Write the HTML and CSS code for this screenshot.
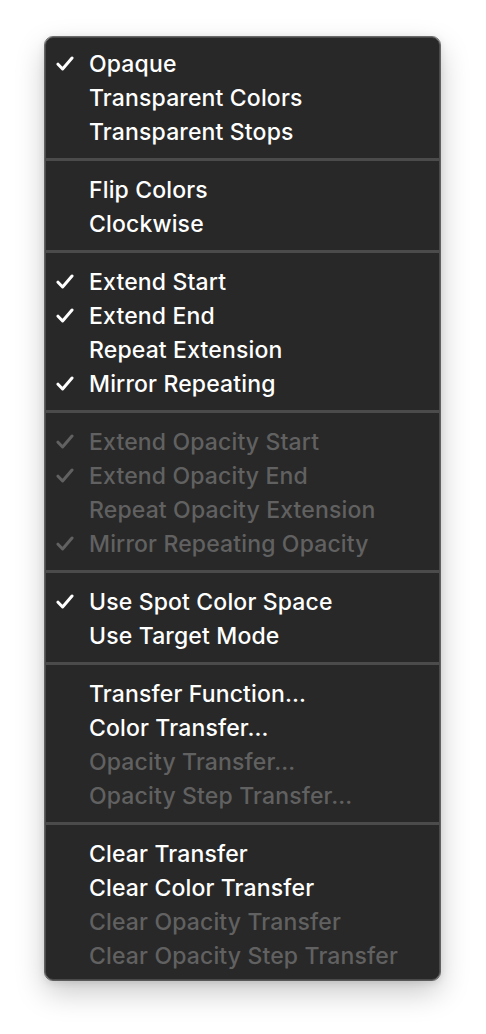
FILE: index.html
```html
<!DOCTYPE html>
<html lang="en">
<head>
    <meta charset="UTF-8">
    <meta name="viewport" content="width=device-width, initial-scale=1.0">
    <title>Gradient Options Menu</title>
    <link rel="stylesheet" href="styles.css">
</head>
<body>
    <div class="menu">
        <ul class="group">
            <li class="item checked">Opaque</li>
            <li class="item">Transparent Colors</li>
            <li class="item">Transparent Stops</li>
        </ul>
        <div class="separator"></div>
        <ul class="group">
            <li class="item">Flip Colors</li>
            <li class="item">Clockwise</li>
        </ul>
        <div class="separator"></div>
        <ul class="group">
            <li class="item checked">Extend Start</li>
            <li class="item checked">Extend End</li>
            <li class="item">Repeat Extension</li>
            <li class="item checked">Mirror Repeating</li>
        </ul>
        <div class="separator"></div>
        <ul class="group">
            <li class="item checked disabled">Extend Opacity Start</li>
            <li class="item checked disabled">Extend Opacity End</li>
            <li class="item disabled">Repeat Opacity Extension</li>
            <li class="item checked disabled">Mirror Repeating Opacity</li>
        </ul>
        <div class="separator"></div>
        <ul class="group">
            <li class="item checked">Use Spot Color Space</li>
            <li class="item">Use Target Mode</li>
        </ul>
        <div class="separator"></div>
        <ul class="group">
            <li class="item">Transfer Function…</li>
            <li class="item">Color Transfer…</li>
            <li class="item disabled">Opacity Transfer…</li>
            <li class="item disabled">Opacity Step Transfer…</li>
        </ul>
        <div class="separator"></div>
        <ul class="group">
            <li class="item">Clear Transfer</li>
            <li class="item">Clear Color Transfer</li>
            <li class="item disabled">Clear Opacity Transfer</li>
            <li class="item disabled">Clear Opacity Step Transfer</li>
        </ul>
    </div>
</body>
</html>
```

FILE: styles.css
```css
* {
    margin: 0;
    padding: 0;
    box-sizing: border-box;
}

body {
    background: #fff;
    font-family: 'Inter', 'Noto Sans', sans-serif;
    min-height: 100vh;
}

.menu {
    margin: 37px 0 0 45px;
    width: 395px;
    padding: 8px 0 7px;
    background: #282828;
    border: 1px solid #4a4a4a;
    border-radius: 8px;
    outline: 1px solid rgba(0, 0, 0, 0.55);
    box-shadow: 0 12px 30px rgba(0, 0, 0, 0.22), 0 2px 8px rgba(0, 0, 0, 0.12);
}

.group {
    list-style: none;
}

.item {
    height: 34px;
    display: flex;
    align-items: center;
    padding: 2px 0 0 43px;
    position: relative;
    color: #fff;
    font-size: 23px;
    font-weight: 500;
    letter-spacing: 0.15px;
}

.item.checked::before {
    content: '';
    position: absolute;
    left: 10px;
    top: 10px;
    width: 18px;
    height: 15px;
    background: no-repeat center / contain url("data:image/svg+xml,%3Csvg xmlns='http://www.w3.org/2000/svg' viewBox='0 0 18 15'%3E%3Cpath d='M2 8.2 L6.6 13 L16 2' fill='none' stroke='%23fff' stroke-width='3' stroke-linecap='round' stroke-linejoin='round'/%3E%3C/svg%3E");
}

.item.disabled {
    color: #616161;
}

.item.disabled.checked::before {
    background-image: url("data:image/svg+xml,%3Csvg xmlns='http://www.w3.org/2000/svg' viewBox='0 0 18 15'%3E%3Cpath d='M2 8.2 L6.6 13 L16 2' fill='none' stroke='%23616161' stroke-width='3' stroke-linecap='round' stroke-linejoin='round'/%3E%3C/svg%3E");
}

.separator {
    height: 3px;
    margin: 10px 0 11px;
    background: #4b4b4b;
}
```
